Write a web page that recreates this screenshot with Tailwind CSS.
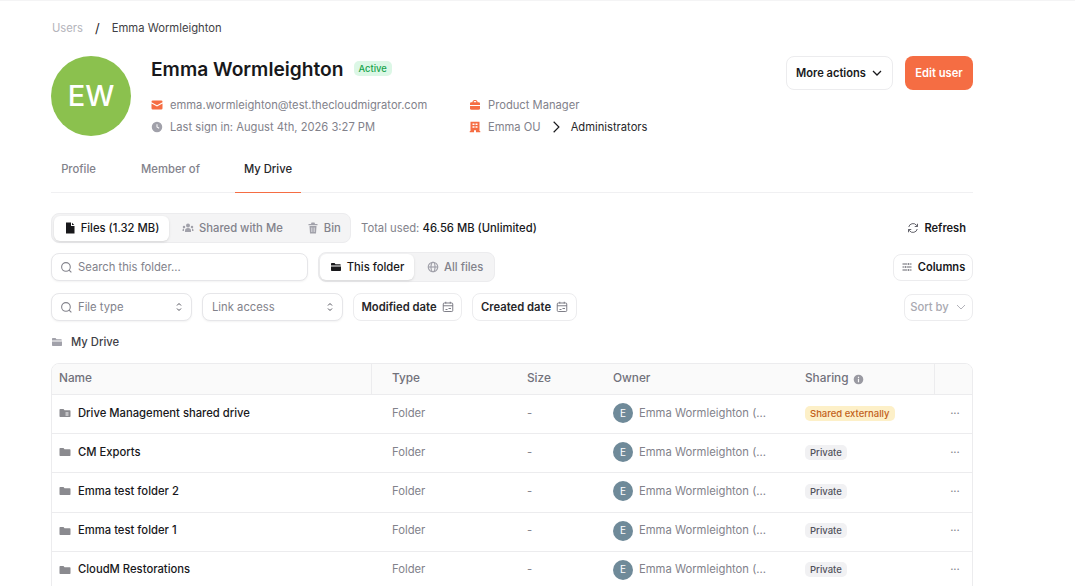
<!DOCTYPE html>
<html lang="en">
<head>
<meta charset="utf-8">
<title>Emma Wormleighton</title>
<script src="https://cdn.jsdelivr.net/npm/@tailwindcss/browser@4"></script>
</head>
<body class="bg-white font-['Inter',sans-serif] text-[#18181b]">
<div class="h-[586px] overflow-hidden border-t border-[#f4f4f5] pl-[51px] pr-[102px] pt-[19px]">
  <nav class="flex h-4 items-center text-[11.25px] leading-4">
    <span class="ml-px text-[#b4b4bb]">Users</span>
    <span class="ml-[12px] text-[13px] text-[#27272a]">/</span>
    <span class="ml-[12px] text-[#3f3f46]">Emma Wormleighton</span>
  </nav>

  <header class="mt-5 flex h-20 items-start">
    <div class="flex size-20 shrink-0 items-center justify-center rounded-full bg-[#8bc14e] text-[29px] font-medium text-white">EW</div>
    <div class="ml-5 flex-1">
      <div class="flex h-6 items-center pt-px">
        <h1 class="text-[19.2px] leading-6 font-semibold text-[#18181b]">Emma Wormleighton</h1>
        <span class="ml-[10px] rounded-[5px] bg-[#dcf7e6] px-[5px] py-[1px] text-[9.4px] leading-[13px] font-medium text-[#16a34a]">Active</span>
      </div>
      <div class="mt-[17px] flex text-[11.2px] text-[#82828b]">
        <div class="flex w-[318px] flex-col gap-[6px]">
          <div class="flex h-4 items-center">
            <svg class="size-3" viewBox="0 0 24 24" fill="#f56d43"><path d="M1 5.500A2.500 2.500 0 0 1 3.500 3h17A2.500 2.500 0 0 1 23 5.500v.8l-11 6-11-6z"/><path d="M1 9v9.500A2.500 2.500 0 0 0 3.500 21h17a2.500 2.500 0 0 0 2.500-2.500V9l-11 6z"/></svg>
            <span class="ml-[7px]">emma.wormleighton@test.thecloudmigrator.com</span>
          </div>
          <div class="flex h-4 items-center">
            <svg class="size-3" viewBox="0 0 24 24" fill="#a1a1aa"><path d="M12 1.500a10.500 10.500 0 1 0 0 21 10.500 10.500 0 0 0 0-21zm1 5v5l3.800 2.200-1 1.700L11 12.500V6.500z"/></svg>
            <span class="ml-[7px]">Last sign in: August 4th, 2026 3:27 PM</span>
          </div>
        </div>
        <div class="flex flex-col gap-[6px]">
          <div class="flex h-4 items-center">
            <svg class="size-3" viewBox="0 0 24 24" fill="#f56d43"><path fill-rule="evenodd" d="M7 6.500V5a4 4 0 0 1 4-3h2a4 4 0 0 1 4 3v1.500h2.500A2.500 2.500 0 0 1 22 9v3H2V9a2.500 2.500 0 0 1 2.500-2.500zm2.500 0h5V5q0-1-1.500-1h-2Q9.500 4 9.500 5z"/><path d="M2 14h20v4.500a3 3 0 0 1-3 3H5a3 3 0 0 1-3-3z"/></svg>
            <span class="ml-[7px]">Product Manager</span>
          </div>
          <div class="flex h-4 items-center">
            <svg class="size-3" viewBox="0 0 24 24" fill="#f56d43"><path fill-rule="evenodd" d="M3 1.500h18v18.500h1.500v2.500H14v-4h-4v4H1.500V20H3zm4 3.500v3h4V5zm6 0v3h4V5zM7 10.500v3h4v-3zm6 0v3h4v-3z"/></svg>
            <span class="ml-[7px]">Emma OU</span>
            <svg class="ml-[8px] size-[14px]" viewBox="0 0 24 24" fill="none" stroke="#18181b" stroke-width="2"><path d="m8 3 9 9-9 9"/></svg>
            <span class="ml-[8px] text-[#27272a]">Administrators</span>
          </div>
        </div>
      </div>
    </div>
    <div class="flex items-center gap-3">
      <button class="flex h-[34px] w-[107px] items-center justify-center gap-[5px] rounded-lg border border-[#ececee] bg-white text-[11.1px] font-semibold text-[#18181b]">More actions
        <svg class="size-3" viewBox="0 0 24 24" fill="none" stroke="#18181b" stroke-width="2.500"><path d="m4 8 8 8 8-8"/></svg>
      </button>
      <button class="h-[34px] w-[68px] rounded-lg bg-[#f56d43] text-[11.2px] font-semibold text-white">Edit user</button>
    </div>
  </header>

  <div class="mt-[18px] flex h-[39px] items-stretch gap-[25px] border-b border-[#f0f0f2] text-[11.25px] font-medium text-[#82828b]">
    <div class="flex w-[55px] items-center justify-center pb-2">Profile</div>
    <div class="flex w-[79px] items-center justify-center pb-2">Member of</div>
    <div class="-mb-px flex w-[66px] items-center justify-center border-b border-[#f56d43] pb-2 text-[#27272a]">My Drive</div>
  </div>

  <div class="mt-5 flex h-[30px] items-center text-[11.25px]">
    <div class="flex h-[30px] w-[300px] items-center rounded-lg border border-[#ececee] bg-[#f4f4f5] p-[2px] font-medium text-[#82828b]">
      <div class="flex h-[25px] w-[115px] items-center justify-center gap-[5px] rounded-md bg-white font-medium text-[#18181b] shadow-sm">
        <svg class="size-3" viewBox="0 0 24 24" fill="#18181b"><path d="M4 1h10v7h7v15H4z"/><path d="M16 1.500 20.500 6H16z"/></svg>Files (1.32 MB)
      </div>
      <div class="ml-[13px] flex items-center gap-[5px]">
        <svg class="size-3" viewBox="0 0 24 24" fill="#a1a1aa"><circle cx="12" cy="7" r="4"/><circle cx="4" cy="10" r="2.500"/><circle cx="20" cy="10" r="2.500"/><path d="M6 20v-3a6 5 0 0 1 12 0v3z"/><path d="M1 18v-2a3 3 0 0 1 3-3v5zM23 18v-2a3 3 0 0 0-3-3v5z"/></svg>Shared with Me
      </div>
      <div class="ml-[24px] flex items-center gap-[5px]">
        <svg class="size-3" viewBox="0 0 24 24" fill="#a1a1aa"><path d="M9 1h6l1 3h5v2.500H3V4h5z"/><path fill-rule="evenodd" d="M5 8h14l-1 15H6zm4 3v9h1.500v-9zm4.500 0v9H15v-9z"/></svg>Bin
      </div>
    </div>
    <div class="ml-[10px] text-[#82828b]">Total used: <span class="font-medium text-[#18181b]">46.56 MB (Unlimited)</span></div>
    <button class="ml-auto mr-[7px] flex items-center gap-[5px] text-[11.1px] font-semibold text-[#18181b]">
      <svg class="size-3" viewBox="0 0 24 24" fill="none" stroke="#52525b" stroke-width="1.800"><path d="M3.500 10A8.800 8.800 0 0 1 19 6.500L21 9M21 3.500V9h-5.500M20.500 14A8.800 8.800 0 0 1 5 17.500L3 15M3 20.500V15h5.500"/></svg>Refresh
    </button>
  </div>

  <div class="mt-[9px] flex h-[30px] items-center text-[11.25px]">
    <div class="flex h-[28px] w-[257px] items-center rounded-lg border border-[#e6e6e9] bg-white px-[8px] text-[#82828b] shadow-xs">
      <svg class="size-[13px]" viewBox="0 0 24 24" fill="none" stroke="#82828b" stroke-width="2"><circle cx="11" cy="11" r="8"/><path d="m21 21-4.300-4.300"/></svg>
      <span class="ml-[5px]">Search this folder...</span>
    </div>
    <div class="ml-[10px] flex h-[30px] w-[177px] items-center rounded-lg border border-[#ececee] bg-[#f4f4f5] p-[1px] font-medium text-[#82828b]">
      <div class="flex h-[26px] w-[94px] items-center justify-center gap-[5px] rounded-md bg-white text-[#18181b] shadow-sm">
        <svg class="size-3" viewBox="0 0 24 24" fill="#18181b"><path d="M2 5.500A1.500 1.500 0 0 1 3.500 4H9l2 2.500h9A1.500 1.500 0 0 1 21.500 8v1h-19.500z"/><path d="M2 11h20v7.500a1.500 1.500 0 0 1-1.500 1.500h-17A1.500 1.500 0 0 1 2 18.500z"/></svg>This folder
      </div>
      <div class="ml-[13px] flex items-center gap-[5px]">
        <svg class="size-3" viewBox="0 0 24 24" fill="none" stroke="#a1a1aa" stroke-width="2.400"><circle cx="12" cy="12" r="9.500"/><ellipse cx="12" cy="12" rx="4" ry="9.500"/><path d="M2.500 12h19"/></svg>All files
      </div>
    </div>
    <button class="ml-auto flex h-[27px] w-[80px] items-center justify-center gap-[5px] rounded-lg border border-[#ececee] bg-white text-[11.1px] font-semibold text-[#18181b]">
      <svg class="size-3" viewBox="0 0 24 24" fill="none" stroke="#52525b" stroke-width="1.800"><path d="M3 6h9M17 6h4M3 12h3M11 12h10M3 18h9M17 18h4M14.500 4v4M8.500 10v4M14.500 16v4"/></svg>Columns
    </button>
  </div>

  <div class="mt-[11px] flex h-[28px] items-center text-[11.25px]">
    <div class="flex h-[28px] w-[141px] items-center justify-between rounded-lg border border-[#e6e6e9] bg-white pr-[6px] pl-[8px] text-[#82828b] shadow-xs">
      <span class="flex items-center"><svg class="size-[13px]" viewBox="0 0 24 24" fill="none" stroke="#82828b" stroke-width="2"><circle cx="11" cy="11" r="8"/><path d="m21 21-4.300-4.300"/></svg><span class="ml-[5px]">File type</span></span>
      <svg class="size-3" viewBox="0 0 24 24" fill="none" stroke="#52525b" stroke-width="2"><path d="m8 9 4-4 4 4M8 15l4 4 4-4"/></svg>
    </div>
    <div class="ml-[10px] flex h-[28px] w-[141px] items-center justify-between rounded-lg border border-[#e6e6e9] bg-white pr-[6px] pl-[9px] text-[#82828b] shadow-xs">
      <span>Link access</span>
      <svg class="size-3" viewBox="0 0 24 24" fill="none" stroke="#52525b" stroke-width="2"><path d="m8 9 4-4 4 4M8 15l4 4 4-4"/></svg>
    </div>
    <div class="ml-[10px] flex h-[28px] w-[109px] items-center justify-center gap-[5px] rounded-lg border border-[#ececee] bg-white font-semibold text-[#27272a]">Modified date
      <svg class="size-3" viewBox="0 0 24 24" fill="none" stroke="#71717a" stroke-width="1.800"><rect x="2.500" y="4" width="19" height="17" rx="2"/><path d="M2.500 9.500h19M7.500 1.500V5M16.500 1.500V5M13 15h5M7 17h4" /></svg>
    </div>
    <div class="ml-[10px] flex h-[28px] w-[105px] items-center justify-center gap-[5px] rounded-lg border border-[#ececee] bg-white font-semibold text-[#27272a]">Created date
      <svg class="size-3" viewBox="0 0 24 24" fill="none" stroke="#71717a" stroke-width="1.800"><rect x="2.500" y="4" width="19" height="17" rx="2"/><path d="M2.500 9.500h19M7.500 1.500V5M16.500 1.500V5M13 15h5M7 17h4" /></svg>
    </div>
    <div class="ml-auto flex h-[27px] w-[69px] items-center justify-center gap-[6px] rounded-lg border border-[#ececee] bg-white font-medium text-[#a9a9b1]">Sort by
      <svg class="size-3" viewBox="0 0 24 24" fill="none" stroke="#a9a9b1" stroke-width="1.800"><path d="m4 8 8 8 8-8"/></svg>
    </div>
  </div>

  <div class="mt-[13px] flex h-4 items-center text-[11.25px] font-medium text-[#3f3f46]">
    <svg class="size-3" viewBox="0 0 24 24" fill="#a1a1aa"><path d="M2 5.500A1.500 1.500 0 0 1 3.500 4H9l2 2.500h9A1.500 1.500 0 0 1 21.500 8v1h-19.500z"/><path d="M2 11h20v7.500a1.500 1.500 0 0 1-1.500 1.500h-17A1.500 1.500 0 0 1 2 18.500z"/></svg>
    <span class="ml-2">My Drive</span>
  </div>

  <div class="mt-[13px] overflow-hidden rounded-t-lg border border-[#ececee]">
    <div class="grid h-[31px] grid-cols-[320px_135px_86px_192px_149px_1fr] items-stretch border-b border-[#ececee] bg-[#fafafa] text-[11.8px] font-medium text-[#71717a]">
      <div class="flex items-center border-r border-[#ececee] pl-[7px]">Name</div>
      <div class="flex items-center pl-5">Type</div>
      <div class="flex items-center pl-5">Size</div>
      <div class="flex items-center pl-5">Owner</div>
      <div class="flex items-center gap-1 pl-5">Sharing
        <svg class="size-[11px]" viewBox="0 0 24 24" fill="#9a9aa2"><path fill-rule="evenodd" d="M12 1.500a10.500 10.500 0 1 0 0 21 10.500 10.500 0 0 0 0-21zM10.700 6h2.600v2.600h-2.600zm0 4.500h2.600V18h-2.600z"/></svg>
      </div>
      <div class="border-l border-[#ececee]"></div>
    </div>

    <div class="grid h-[39.2px] grid-cols-[320px_135px_86px_192px_149px_1fr] items-center border-b border-[#ececee] pb-[2px] text-[11.25px] text-[#82828b]">
      <div class="flex items-center pl-[7px] font-medium text-[#18181b]">
        <svg class="size-3" viewBox="0 0 24 24" fill="#8a8a8f"><path fill-rule="evenodd" d="M1 5.500A1.500 1.500 0 0 1 2.500 4H9l2 2.500h10.500A1.500 1.500 0 0 1 23 8v10.500a1.500 1.500 0 0 1-1.500 1.500h-19A1.500 1.500 0 0 1 1 18.500zM13 11v2h6v-2zm0 4v2h6v-2z"/></svg>
        <span class="ml-[7px]">Drive Management shared drive</span>
      </div>
      <div class="pl-5">Folder</div>
      <div class="pl-5">-</div>
      <div class="flex items-center pl-5"><span class="flex size-5 items-center justify-center rounded-full bg-[#6f8a99] text-[10px] text-white">E</span><span class="ml-[6px]">Emma Wormleighton (...</span></div>
      <div class="pl-5"><span class="rounded-[5px] bg-[#fdf0c8] px-[5px] py-[2px] text-[9.5px] font-medium text-[#c2611a]">Shared externally</span></div>
      <div class="pl-[4px] text-center text-[#82828b]">···</div>
    </div>

    <div class="grid h-[39.2px] grid-cols-[320px_135px_86px_192px_149px_1fr] items-center border-b border-[#ececee] pb-[2px] text-[11.25px] text-[#82828b]">
      <div class="flex items-center pl-[7px] font-medium text-[#18181b]">
        <svg class="size-3" viewBox="0 0 24 24" fill="#8a8a8f"><path d="M1 5.500A1.500 1.500 0 0 1 2.500 4H9l2 2.500h10.500A1.500 1.500 0 0 1 23 8v10.500a1.500 1.500 0 0 1-1.500 1.500h-19A1.500 1.500 0 0 1 1 18.500z"/></svg>
        <span class="ml-[7px]">CM Exports</span>
      </div>
      <div class="pl-5">Folder</div>
      <div class="pl-5">-</div>
      <div class="flex items-center pl-5"><span class="flex size-5 items-center justify-center rounded-full bg-[#6f8a99] text-[10px] text-white">E</span><span class="ml-[6px]">Emma Wormleighton (...</span></div>
      <div class="pl-5"><span class="rounded-[5px] bg-[#f1f1f3] px-[5px] py-[2px] text-[9.5px] font-medium text-[#52525b]">Private</span></div>
      <div class="pl-[4px] text-center text-[#82828b]">···</div>
    </div>

    <div class="grid h-[39.2px] grid-cols-[320px_135px_86px_192px_149px_1fr] items-center border-b border-[#ececee] pb-[2px] text-[11.25px] text-[#82828b]">
      <div class="flex items-center pl-[7px] font-medium text-[#18181b]">
        <svg class="size-3" viewBox="0 0 24 24" fill="#8a8a8f"><path d="M1 5.500A1.500 1.500 0 0 1 2.500 4H9l2 2.500h10.500A1.500 1.500 0 0 1 23 8v10.500a1.500 1.500 0 0 1-1.500 1.500h-19A1.500 1.500 0 0 1 1 18.500z"/></svg>
        <span class="ml-[7px]">Emma test folder 2</span>
      </div>
      <div class="pl-5">Folder</div>
      <div class="pl-5">-</div>
      <div class="flex items-center pl-5"><span class="flex size-5 items-center justify-center rounded-full bg-[#6f8a99] text-[10px] text-white">E</span><span class="ml-[6px]">Emma Wormleighton (...</span></div>
      <div class="pl-5"><span class="rounded-[5px] bg-[#f1f1f3] px-[5px] py-[2px] text-[9.5px] font-medium text-[#52525b]">Private</span></div>
      <div class="pl-[4px] text-center text-[#82828b]">···</div>
    </div>

    <div class="grid h-[39.2px] grid-cols-[320px_135px_86px_192px_149px_1fr] items-center border-b border-[#ececee] pb-[2px] text-[11.25px] text-[#82828b]">
      <div class="flex items-center pl-[7px] font-medium text-[#18181b]">
        <svg class="size-3" viewBox="0 0 24 24" fill="#8a8a8f"><path d="M1 5.500A1.500 1.500 0 0 1 2.500 4H9l2 2.500h10.500A1.500 1.500 0 0 1 23 8v10.500a1.500 1.500 0 0 1-1.500 1.500h-19A1.500 1.500 0 0 1 1 18.500z"/></svg>
        <span class="ml-[7px]">Emma test folder 1</span>
      </div>
      <div class="pl-5">Folder</div>
      <div class="pl-5">-</div>
      <div class="flex items-center pl-5"><span class="flex size-5 items-center justify-center rounded-full bg-[#6f8a99] text-[10px] text-white">E</span><span class="ml-[6px]">Emma Wormleighton (...</span></div>
      <div class="pl-5"><span class="rounded-[5px] bg-[#f1f1f3] px-[5px] py-[2px] text-[9.5px] font-medium text-[#52525b]">Private</span></div>
      <div class="pl-[4px] text-center text-[#82828b]">···</div>
    </div>

    <div class="grid h-[39.2px] grid-cols-[320px_135px_86px_192px_149px_1fr] items-center border-b border-[#ececee] pb-[2px] text-[11.25px] text-[#82828b]">
      <div class="flex items-center pl-[7px] font-medium text-[#18181b]">
        <svg class="size-3" viewBox="0 0 24 24" fill="#8a8a8f"><path d="M1 5.500A1.500 1.500 0 0 1 2.500 4H9l2 2.500h10.500A1.500 1.500 0 0 1 23 8v10.500a1.500 1.500 0 0 1-1.500 1.500h-19A1.500 1.500 0 0 1 1 18.500z"/></svg>
        <span class="ml-[7px]">CloudM Restorations</span>
      </div>
      <div class="pl-5">Folder</div>
      <div class="pl-5">-</div>
      <div class="flex items-center pl-5"><span class="flex size-5 items-center justify-center rounded-full bg-[#6f8a99] text-[10px] text-white">E</span><span class="ml-[6px]">Emma Wormleighton (...</span></div>
      <div class="pl-5"><span class="rounded-[5px] bg-[#f1f1f3] px-[5px] py-[2px] text-[9.5px] font-medium text-[#52525b]">Private</span></div>
      <div class="pl-[4px] text-center text-[#82828b]">···</div>
    </div>
  </div>
</div>
</body>
</html>
